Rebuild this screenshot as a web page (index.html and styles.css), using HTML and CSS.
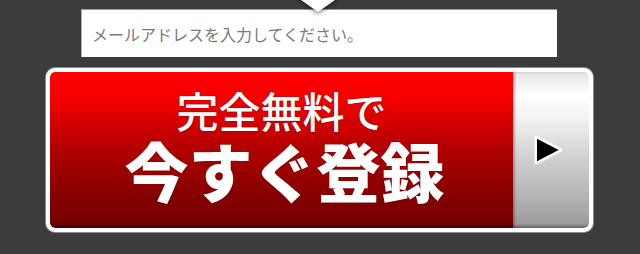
FILE: index.html
```html
<!DOCTYPE html>
<html lang="ja">
<head>
<meta charset="utf-8">
<title>登録</title>
<link rel="stylesheet" href="styles.css">
</head>
<body>
<div class="page">
  <div class="pointer"></div>
  <div class="email">
    <span class="placeholder">メールアドレスを入力してください。</span>
  </div>
  <div class="cta">
    <div class="cta-main">
      <span class="line1">完全無料で</span>
      <span class="line2">今すぐ登録</span>
    </div>
    <div class="cta-arrow">
      <svg width="32" height="32" viewBox="0 0 32 32" class="play">
        <polygon points="4,3 29,16 4,29" fill="#000" stroke="#fff" stroke-width="2" stroke-linejoin="round"/>
      </svg>
    </div>
  </div>
</div>
</body>
</html>
```
FILE: styles.css
```css
html, body {
  margin: 0;
  padding: 0;
  background: #3c3c3c;
}
.page {
  position: relative;
  width: 640px;
  height: 254px;
  padding-top: 9px;
  box-sizing: border-box;
  font-family: "Noto Sans CJK JP", "Noto Sans", sans-serif;
}
.pointer {
  position: absolute;
  left: 294px;
  top: -5px;
  width: 0;
  height: 0;
  border-left: 24px solid transparent;
  border-right: 24px solid transparent;
  border-top: 17px solid #fff;
  filter: drop-shadow(0 2px 2px rgba(0,0,0,0.45));
  z-index: 2;
}
.email {
  margin-left: 81px;
  width: 476px;
  height: 48px;
  box-sizing: border-box;
  background: #fff;
  border-top: 1px solid #9a9a9a;
  border-left: 1px solid #b0b0b0;
  display: flex;
  align-items: center;
  padding-left: 10px;
}
.placeholder {
  font-size: 16px;
  color: #7a7a7a;
  line-height: 1;
}
.cta {
  margin-top: 11px;
  margin-left: 46px;
  width: 547px;
  height: 164px;
  box-sizing: border-box;
  border: 4px solid #fff;
  border-radius: 9px;
  box-shadow: 0 0 0 1px #8a8a8a;
  display: flex;
  overflow: hidden;
  background: #fff;
}
.cta-main {
  width: 463px;
  border-radius: 5px 0 0 5px;
  background: linear-gradient(#ff0000 0%, #f40000 18%, #b00000 50%, #840000 80%, #7a0000 95%, #4a0000 100%);
  display: flex;
  flex-direction: column;
  align-items: center;
  padding-top: 17px;
  box-sizing: border-box;
  gap: 6px;
  color: #fff;
}
.line1 {
  font-size: 42px;
  font-weight: 500;
  line-height: 1;
  text-shadow: 0 0 2px rgba(80,0,0,0.6);
}
.line2 {
  font-size: 64px;
  font-weight: 900;
  line-height: 1;
  text-shadow: 0 0 2px rgba(80,0,0,0.6);
  padding-left: 6px;
}
.cta-arrow {
  flex: 1;
  border-radius: 0 5px 5px 0;
  background: linear-gradient(#e4e4e4 0%, #ffffff 15%, #f2f2f2 30%, #d0d0d0 55%, #b4b4b4 80%, #9c9c9c 97%, #6a6a6a 100%);
  box-shadow: inset 2px 0 2px rgba(0,0,0,0.25);
  display: flex;
  align-items: center;
  justify-content: center;
  padding-right: 6px;
}
.play {
  display: block;
  filter: drop-shadow(0 0 1px #fff);
}
```
